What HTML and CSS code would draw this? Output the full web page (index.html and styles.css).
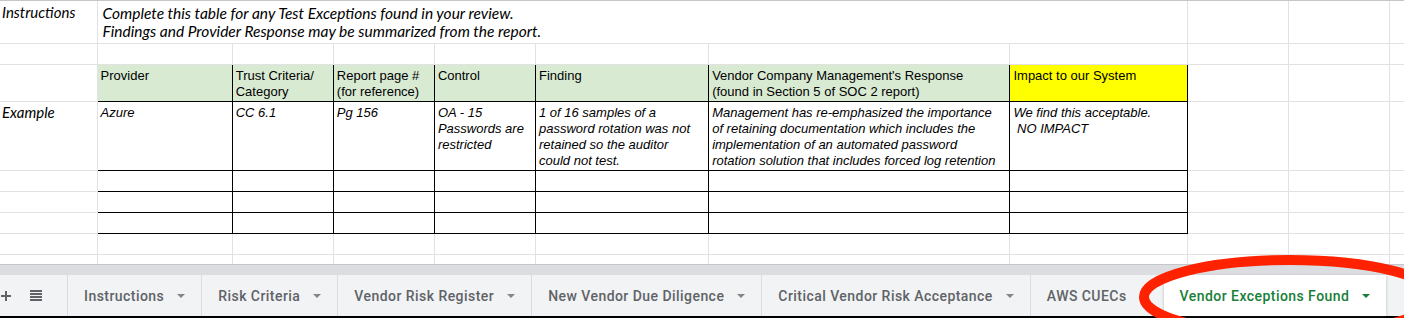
FILE: index.html
```html
<!DOCTYPE html>
<html lang="en">
<head>
  <meta charset="UTF-8" />
  <title>Vendor Exceptions Found</title>
  <link rel="stylesheet" href="styles.css">
</head>
<body>
  <div class="sheet">
    <table class="grid">
      <colgroup>
        <col style="width:97px"><col style="width:135px"><col style="width:101px"><col style="width:101px">
        <col style="width:101px"><col style="width:173px"><col style="width:301px"><col style="width:177px">
        <col style="width:101px"><col style="width:101px"><col style="width:101px">
      </colgroup>
      <tr class="r-intro">
        <td class="label">Instructions</td>
        <td class="note" colspan="7">Complete this table for any Test Exceptions found in your review.<br>Findings and Provider Response may be summarized from the report.</td>
        <td></td><td></td><td></td>
      </tr>
      <tr class="r-small">
        <td class="label"></td><td></td><td></td><td></td><td></td><td></td><td></td><td></td><td></td><td></td><td></td>
      </tr>
      <tr class="r-head">
        <td class="label"></td>
        <td class="box head">Provider</td>
        <td class="box head">Trust Criteria/<br>Category</td>
        <td class="box head">Report page #<br>(for reference)</td>
        <td class="box head">Control</td>
        <td class="box head">Finding</td>
        <td class="box head">Vendor Company Management's Response<br>(found in Section 5 of SOC 2 report)</td>
        <td class="box head impact">Impact to our System</td>
        <td></td><td></td><td></td>
      </tr>
      <tr class="r-example">
        <td class="label">Example</td>
        <td class="box ex">Azure</td>
        <td class="box ex">CC 6.1</td>
        <td class="box ex">Pg 156</td>
        <td class="box ex">OA - 15<br>Passwords are<br>restricted</td>
        <td class="box ex">1 of 16 samples of a<br>password rotation was not<br>retained so the auditor<br>could not test.</td>
        <td class="box ex">Management has re-emphasized the importance<br>of retaining documentation which includes the<br>implementation of an automated password<br>rotation solution that includes forced log retention</td>
        <td class="box ex">We find this acceptable.<br>&nbsp;NO IMPACT</td>
        <td></td><td></td><td></td>
      </tr>
      <tr class="r-small">
        <td class="label"></td><td class="box"></td><td class="box"></td><td class="box"></td><td class="box"></td><td class="box"></td><td class="box"></td><td class="box"></td><td></td><td></td><td></td>
      </tr>
      <tr class="r-small">
        <td class="label"></td><td class="box"></td><td class="box"></td><td class="box"></td><td class="box"></td><td class="box"></td><td class="box"></td><td class="box"></td><td></td><td></td><td></td>
      </tr>
      <tr class="r-small">
        <td class="label"></td><td class="box"></td><td class="box"></td><td class="box"></td><td class="box"></td><td class="box"></td><td class="box"></td><td class="box"></td><td></td><td></td><td></td>
      </tr>
      <tr class="r-small">
        <td class="label"></td><td></td><td></td><td></td><td></td><td></td><td></td><td></td><td></td><td></td><td></td>
      </tr>
      <tr class="r-small">
        <td class="label"></td><td></td><td></td><td></td><td></td><td></td><td></td><td></td><td></td><td></td><td></td>
      </tr>
    </table>
  </div>

  <div class="hscroll"></div>

  <div class="tabbar">
    <div class="tools">
      <span class="plus"></span>
      <span class="list"><i></i><i></i><i></i><i></i></span>
    </div>
    <div class="tab">Instructions<span class="caret"></span></div>
    <div class="tab">Risk Criteria<span class="caret"></span></div>
    <div class="tab">Vendor Risk Register<span class="caret"></span></div>
    <div class="tab">New Vendor Due Diligence<span class="caret"></span></div>
    <div class="tab">Critical Vendor Risk Acceptance<span class="caret"></span></div>
    <div class="tab">AWS CUECs<span class="caret"></span></div>
    <div class="tab active">Vendor Exceptions Found<span class="caret"></span></div>
  </div>
  <div class="under"></div>

  <svg class="marker" width="1404" height="318" viewBox="0 0 1404 318">
    <ellipse cx="1290" cy="297" rx="146" ry="37" fill="none" stroke="#fe2200" stroke-width="10" />
  </svg>
</body>
</html>
```

FILE: styles.css
```css
body {
  margin: 0;
  width: 1404px;
  height: 318px;
  overflow: hidden;
  background: #fff;
  font-family: 'Liberation Sans', Arial, sans-serif;
}

.sheet {
  height: 264px;
  overflow: hidden;
  border-top: 1px solid #c6c6c6;
  box-sizing: border-box;
}

.grid {
  border-collapse: collapse;
  table-layout: fixed;
  width: 1491px;
  font-size: 13px;
  line-height: 16px;
  color: #000;
}

.grid td {
  border: 1px solid #e2e2e2;
  padding: 2px 3px 0;
  vertical-align: top;
  white-space: nowrap;
  overflow: hidden;
}

.grid tr:first-child td {
  border-top: none;
}

.grid td.label {
  border-left: none;
  padding-left: 2px;
  font-family: Lato, 'Open Sans', sans-serif;
  font-style: italic;
  font-size: 15px;
  line-height: 18px;
}

.grid td.note {
  padding-left: 5px;
  padding-top: 3px;
  font-family: Lato, 'Open Sans', sans-serif;
  font-style: italic;
  font-size: 15.5px;
  line-height: 18px;
}

.r-intro { height: 42px; }
.r-small { height: 21px; }
.r-head { height: 37px; }
.r-example { height: 69px; }

.r-intro td.label { padding-top: 2px; }
.r-example td.label { padding-top: 1px; }

.grid td.box {
  border: 1px solid #000;
}

.grid td.head {
  background: #d9ead3;
  padding-top: 3px;
}

.grid td.impact {
  background: #ffff00;
}

.grid td.ex {
  font-style: italic;
  padding-top: 3px;
}

.hscroll {
  height: 10px;
  background: #dcdde0;
  border-top: 1px solid #c4c6ca;
}

.tabbar {
  height: 41px;
  background: #f1f3f4;
  display: flex;
  align-items: stretch;
  font-family: Roboto, 'Noto Sans', sans-serif;
  font-size: 14px;
  font-weight: 500;
  color: #5f6368;
}

.tools {
  flex-shrink: 0;
  width: 67px;
  display: flex;
  align-items: center;
  gap: 19px;
  padding-left: 1px;
  box-sizing: border-box;
}

.plus {
  width: 10px;
  height: 10px;
  background:
    linear-gradient(#5f6368, #5f6368) center / 10px 2px no-repeat,
    linear-gradient(#5f6368, #5f6368) center / 2px 10px no-repeat;
}

.list {
  display: flex;
  flex-direction: column;
  gap: 1px;
  width: 12px;
}

.list i {
  display: block;
  height: 2px;
  background: #5f6368;
}

.tab {
  flex-shrink: 0;
  display: flex;
  align-items: center;
  padding: 0 16px;
  border-left: 1px solid #dadce0;
  letter-spacing: 0.45px;
  white-space: nowrap;
}

.caret {
  margin-left: 13px;
  width: 0;
  height: 0;
  border-left: 4px solid transparent;
  border-right: 4px solid transparent;
  border-top: 4px solid #80868b;
}

.tab.active {
  background: #fff;
  color: #188038;
  border-left: none;
  box-shadow: 0 1px 3px rgba(60, 64, 67, 0.3);
}

.tab.active .caret {
  border-top-color: #188038;
}

.under {
  height: 2px;
  background: #000;
}

.marker {
  position: absolute;
  left: 0;
  top: 0;
  pointer-events: none;
}
```
